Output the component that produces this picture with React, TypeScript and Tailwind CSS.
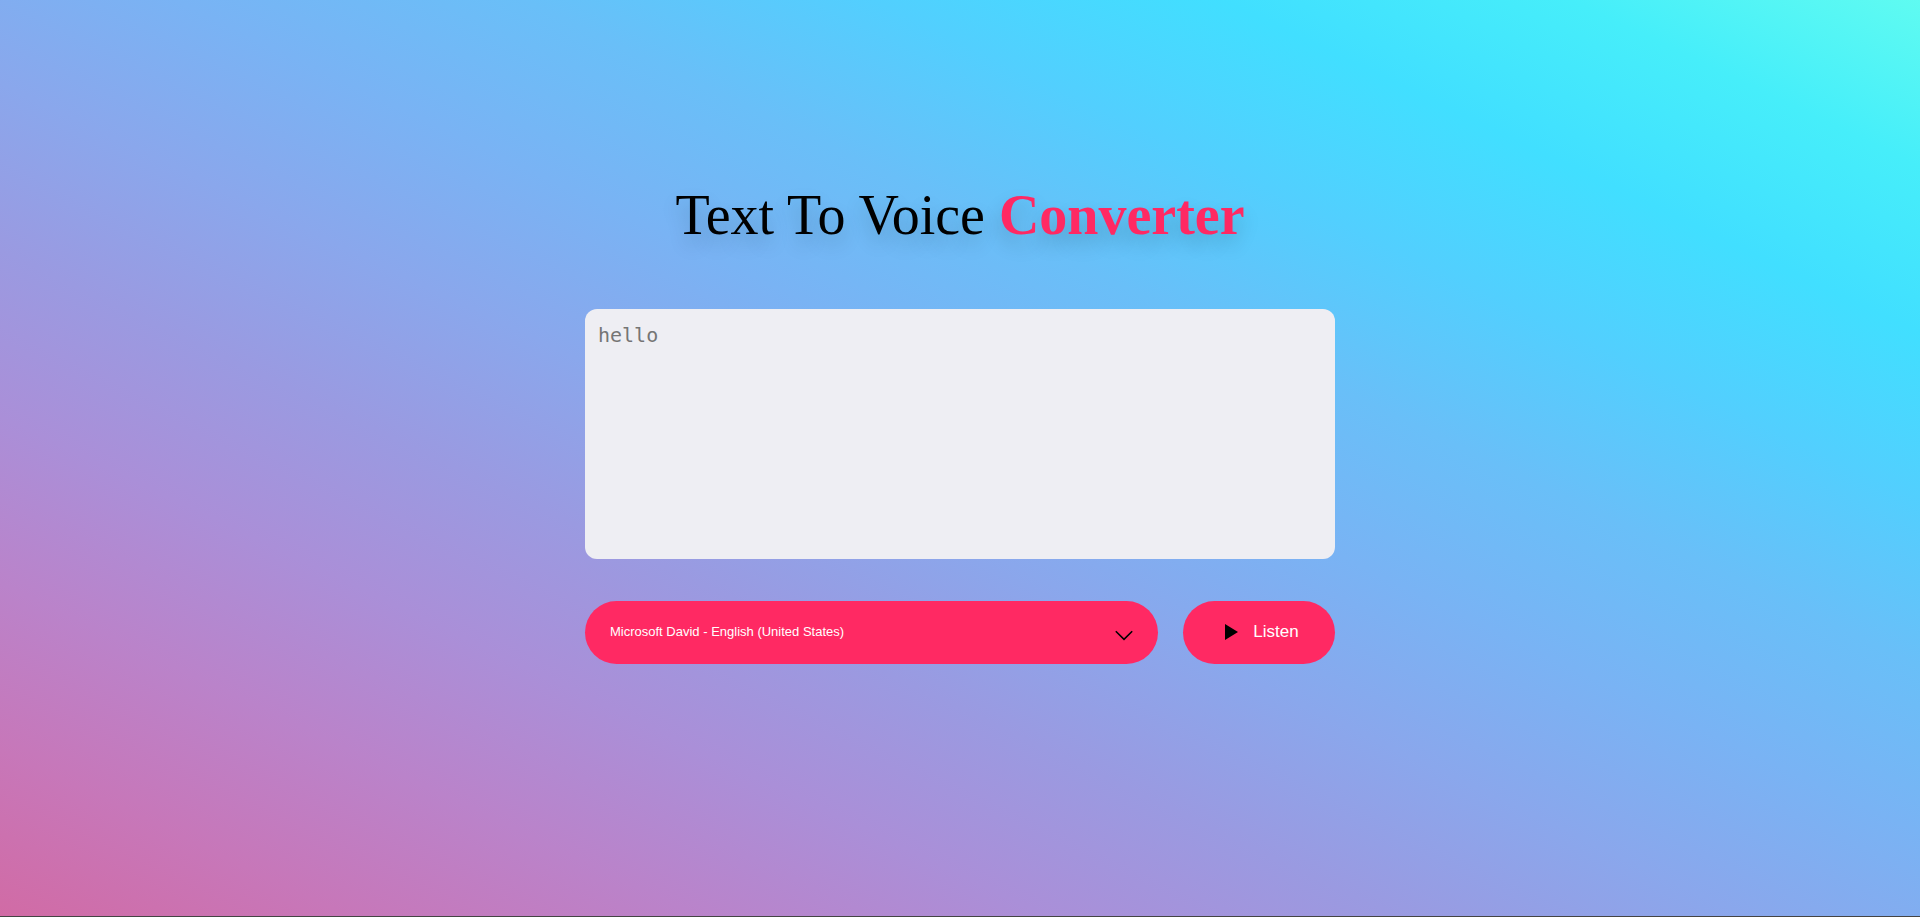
export default function App() {
  return (
    <main className="flex min-h-screen flex-col items-center justify-center border-b border-[#444444] bg-[linear-gradient(to_right_top,#d16ba5,#c777b9,#ba83ca,#aa8fd8,#9a9ae1,#8aa7ec,#79b3f4,#69bff8,#52cffe,#41dfff,#46eefa,#5ffbf1)] px-6 pb-[70px] font-['Liberation_Sans',Arial,sans-serif]">
      <h1 className="mb-[62px] text-center font-['Liberation_Serif','Times_New_Roman',serif] text-[56px] leading-16 text-black [text-shadow:0_10px_20px_rgba(0,0,0,0.2)]">
        Text To Voice <span className="font-bold text-[#ff2963]">Converter</span>
      </h1>
      <form className="w-full max-w-[750px]" onSubmit={(e) => e.preventDefault()}>
        <textarea
          aria-label="Text to read aloud"
          placeholder="hello"
          className="mb-[42px] block h-[250px] w-full resize-none rounded-xl bg-[#eeeef3] px-[13px] py-3 font-['DejaVu_Sans_Mono',monospace] text-[20px] leading-7 text-black outline-none placeholder:text-[#757575]"
        />
        <div className="flex items-center gap-[25px]">
          <div className="relative flex-1">
            <select
              aria-label="Voice"
              className="block h-[63px] w-full appearance-none rounded-full bg-[#ff2963] px-[25px] text-[13px] text-white outline-none"
            >
              <option>Microsoft David - English (United States)</option>
            </select>
            <svg
              aria-hidden="true"
              viewBox="0 0 18 11"
              className="pointer-events-none absolute top-[29px] right-[25px] h-[11px] w-[18px]"
            >
              <path d="M0.8 1.2 9 9.4 17.2 1.2" fill="none" stroke="black" strokeWidth="1.6" />
            </svg>
          </div>
          <button
            type="submit"
            className="flex h-[63px] w-[152px] items-center justify-center gap-[15px] rounded-full bg-[#ff2963] pl-1.5 text-[17px] text-white"
          >
            <svg aria-hidden="true" viewBox="0 0 13 16" className="h-4 w-[13px]">
              <path d="M0 0 13 8 0 16Z" fill="black" />
            </svg>
            Listen
          </button>
        </div>
      </form>
    </main>
  );
}
